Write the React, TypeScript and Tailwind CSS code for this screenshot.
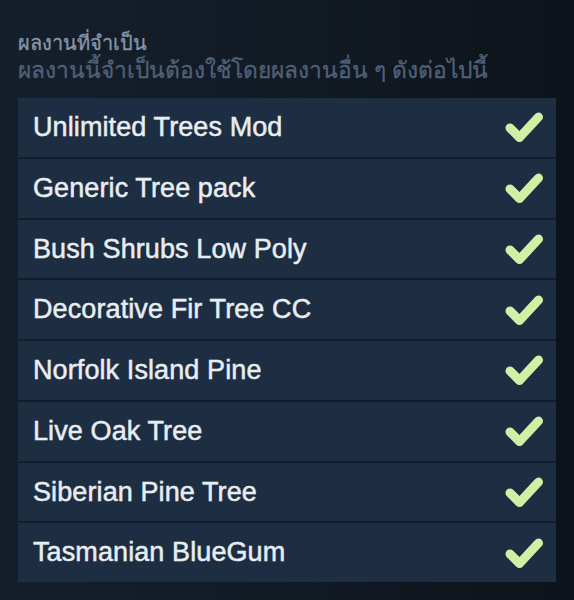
import React from "react";

const items = [
  "Unlimited Trees Mod",
  "Generic Tree pack",
  "Bush Shrubs Low Poly",
  "Decorative Fir Tree CC",
  "Norfolk Island Pine",
  "Live Oak Tree",
  "Siberian Pine Tree",
  "Tasmanian BlueGum",
];

function Check() {
  return (
    <svg width="40" height="36" viewBox="0 0 40 36" className="shrink-0">
      <path
        d="M6 19 L15.5 28.5 L34.5 8"
        fill="none"
        stroke="#d3efa6"
        strokeWidth="9"
        strokeLinecap="round"
        strokeLinejoin="round"
      />
    </svg>
  );
}

export default function App() {
  return (
    <div
      className="w-[574px] h-[600px] bg-gradient-to-r from-[#151f2b] via-[#121a24] to-[#0d131a] pt-[30px] pl-[18px] pr-[18px]"
      style={{ fontFamily: '"Liberation Sans", "Noto Sans", Arial, sans-serif' }}
    >
      <div
        className="text-[20px] leading-[26px] text-[#8796a8] [-webkit-text-stroke:0.3px_#8796a8]"
        style={{ fontFamily: '"Noto Sans", "Liberation Sans", sans-serif' }}
      >
        ผลงานที่จำเป็น
      </div>
      <div
        className="text-[22.8px] leading-[28px] text-[#4f6178] [-webkit-text-stroke:0.3px_#4f6178]"
        style={{ fontFamily: '"Noto Sans", "Liberation Sans", sans-serif' }}
      >
        ผลงานนี้จำเป็นต้องใช้โดยผลงานอื่น ๆ ดังต่อไปนี้
      </div>
      <div className="mt-[14px] w-[538px] flex flex-col gap-[2px] bg-[#141e2b]">
        {items.map((t) => (
          <div
            key={t}
            className="h-[58.75px] bg-[#1e2e42] flex items-center justify-between pl-[15px] pr-[12px]"
          >
            <span className="text-[27px] text-[#e8edf1] [-webkit-text-stroke:0.5px_#e8edf1] tracking-[0.1px]">
              {t}
            </span>
            <Check />
          </div>
        ))}
      </div>
    </div>
  );
}
